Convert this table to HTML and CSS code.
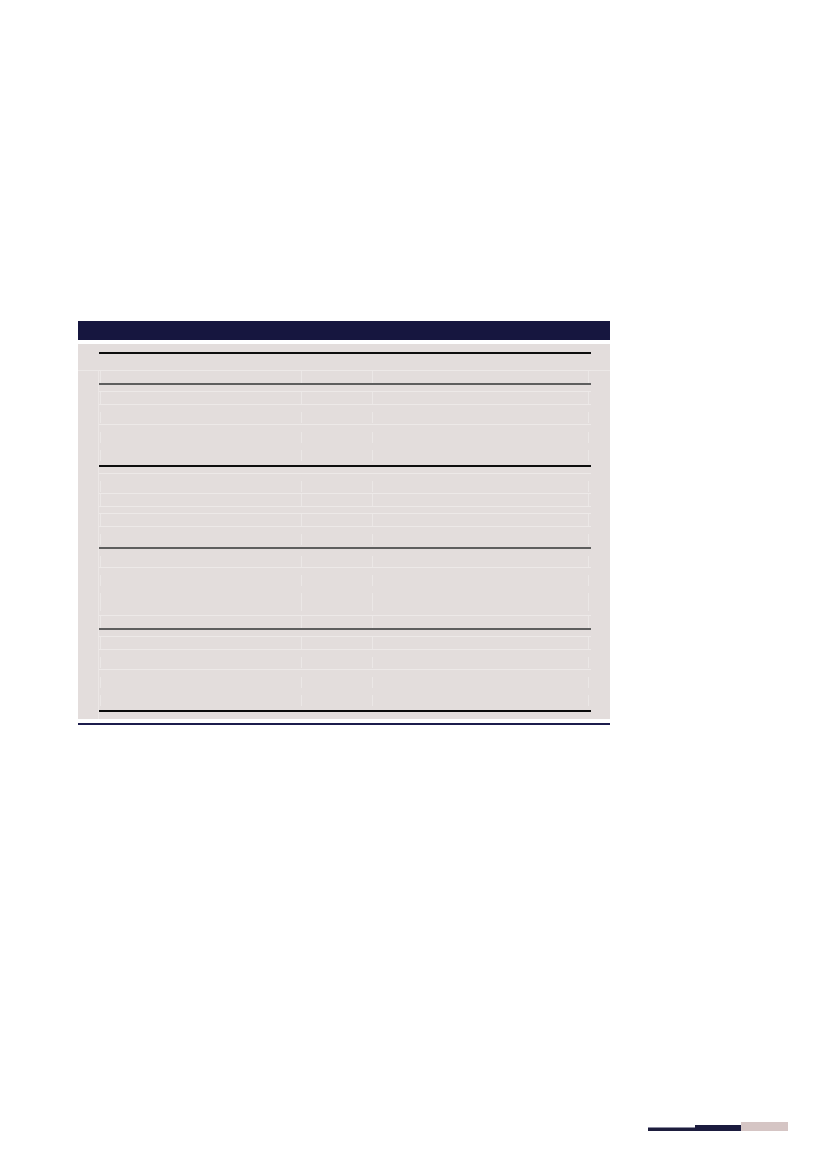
FILE: index.html
```html
<!DOCTYPE html>
<html lang="en">
<head>
<meta charset="utf-8">
<title>Table</title>
<link rel="stylesheet" href="styles.css">
</head>
<body>
<div class="page">
  <div class="title-bar"></div>
  <div class="panel">
    <table class="grid">
      <colgroup><col class="c1"><col class="c2"><col class="c3"></colgroup>
      <tr class="rule-black h18"><td></td><td></td><td></td></tr>
      <tr class="light h13"><td><div class="ln full"></div></td><td><div class="ln full"></div></td><td><div class="ln full last"></div></td></tr>
      <tr class="rule-gray h8"><td></td><td></td><td></td></tr>
      <tr class="light h13"><td><div class="ln full"></div></td><td><div class="ln full"></div></td><td><div class="ln full last"></div></td></tr>
      <tr class="light h20"><td><div class="ln"></div></td><td><div class="ln"></div></td><td><div class="ln last"></div></td></tr>
      <tr class="light h41"><td><div class="ln"></div><div class="ln"></div></td><td><div class="ln"></div><div class="ln"></div></td><td><div class="ln last"></div><div class="ln last"></div></td></tr>
      <tr class="rule-black h8"><td></td><td></td><td></td></tr>
      <tr class="light h20"><td><div class="ln"></div></td><td><div class="ln"></div></td><td><div class="ln last"></div></td></tr>
      <tr class="light h13"><td><div class="ln full"></div></td><td><div class="ln full"></div></td><td><div class="ln full last"></div></td></tr>
      <tr class="light h7"><td></td><td></td><td></td></tr>
      <tr class="light h13"><td><div class="ln full"></div></td><td><div class="ln full"></div></td><td><div class="ln full last"></div></td></tr>
      <tr class="light h21"><td><div class="ln"></div></td><td><div class="ln"></div></td><td><div class="ln last"></div></td></tr>
      <tr class="rule-gray h20"><td><div class="ln"></div></td><td><div class="ln"></div></td><td><div class="ln last"></div></td></tr>
      <tr class="light h48"><td><div class="ln"></div><div class="ln tall"></div></td><td><div class="ln"></div><div class="ln tall"></div></td><td><div class="ln last"></div><div class="ln tall last"></div></td></tr>
      <tr class="light h13"><td><div class="ln full"></div></td><td><div class="ln full"></div></td><td><div class="ln full last"></div></td></tr>
      <tr class="rule-gray h8"><td></td><td></td><td></td></tr>
      <tr class="light h13"><td><div class="ln full"></div></td><td><div class="ln full"></div></td><td><div class="ln full last"></div></td></tr>
      <tr class="light h20"><td><div class="ln"></div></td><td><div class="ln"></div></td><td><div class="ln last"></div></td></tr>
      <tr class="light h43 end"><td><div class="ln"></div><div class="ln"></div></td><td><div class="ln"></div><div class="ln"></div></td><td><div class="ln last"></div><div class="ln last"></div></td></tr>
    </table>
  </div>
  <div class="bottom-rule"></div>
  <div class="footer">
    <span class="seg seg-thin"></span>
    <span class="seg seg-dark"></span>
    <span class="seg seg-pink"></span>
  </div>
</div>
</body>
</html>
```

FILE: styles.css
```css
html, body {
  margin: 0;
  padding: 0;
  background: #ffffff;
  font-family: "Liberation Sans", Arial, sans-serif;
}

.page {
  width: 827px;
  height: 1169px;
  padding-top: 321px;
  box-sizing: border-box;
  overflow: hidden;
}

.title-bar {
  margin-left: 78px;
  width: 532px;
  height: 19px;
  background: #16163f;
}

.panel {
  margin-left: 78px;
  margin-top: 4px;
  width: 532px;
  height: 375px;
  box-sizing: border-box;
  padding: 8px 19px 0 21px;
  background:
    linear-gradient(#ece8e7, #ece8e7) 0 26px / 100% 1px no-repeat,
    linear-gradient(#ebe6e5, #ebe6e5) 20px 26px / 1px 100% no-repeat,
    #e3dddc;
}

.grid {
  width: 492px;
  table-layout: fixed;
  border-collapse: separate;
  border-spacing: 0;
  font-size: 0;
  line-height: 0;
}

.c1 { width: 201px; }
.c2 { width: 71px; }
.c3 { width: 220px; }

.grid td {
  padding: 0 0 0 1px;
  vertical-align: top;
}

.light td { border-top: 1px solid #ede9e8; }
.rule-black td { border-top: 2px solid #0d0d0d; }
.rule-gray td { border-top: 2px solid #5e5e5e; }
.end td { border-bottom: 2px solid #0a0a0a; }

.h7 { height: 7px; }
.h8 { height: 8px; }
.h13 { height: 13px; }
.h18 { height: 18px; }
.h20 { height: 20px; }
.h21 { height: 21px; }
.h41 { height: 41px; }
.h43 { height: 43px; }
.h48 { height: 48px; }

.ln {
  height: 11px;
  margin-top: 7px;
  border-left: 1px solid #ebe7e6;
}

.ln.full {
  height: 12px;
  margin-top: 0;
}

.ln.tall {
  height: 18px;
}

.ln.last {
  margin-right: 2px;
  border-right: 1px solid #ebe7e6;
}

.bottom-rule {
  margin-left: 78px;
  margin-top: 4px;
  width: 532px;
  height: 2px;
  background: #1c1c4c;
}

.footer {
  display: flex;
  align-items: flex-end;
  margin-left: 648px;
  margin-top: 397px;
  height: 9px;
}

.seg {
  display: block;
}

.seg-thin {
  width: 47px;
  height: 3px;
  background: #1d1d3d;
  border-top: 1px solid #8c8ca0;
}

.seg-dark {
  width: 46px;
  height: 6px;
  background: #1b1b3e;
}

.seg-pink {
  width: 47px;
  height: 9px;
  background: #d5c5c4;
}
```
